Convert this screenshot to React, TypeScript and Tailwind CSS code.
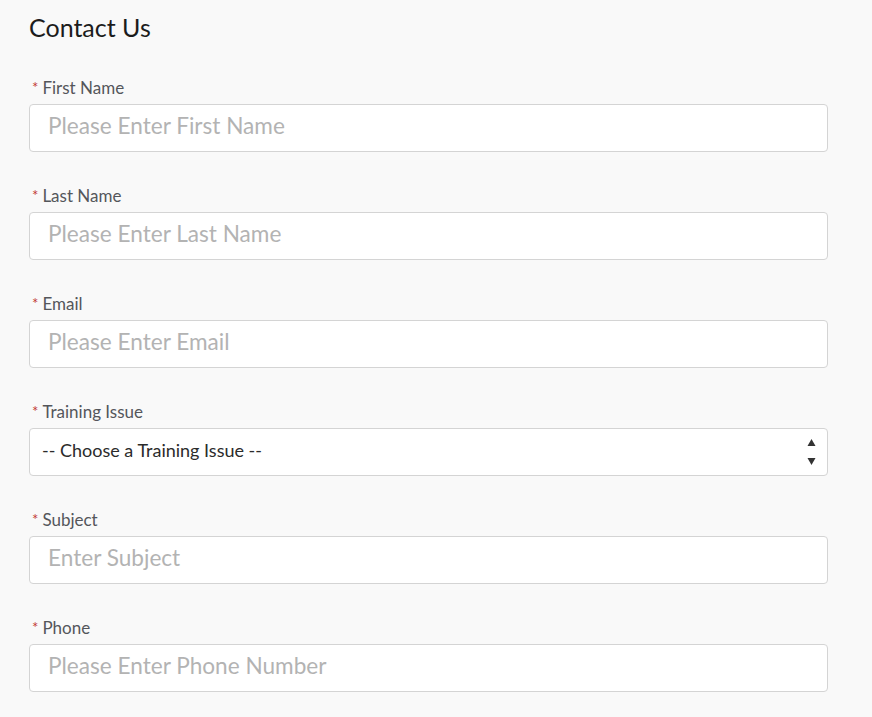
import React from "react";

const FIELDS = [
  { label: "First Name", placeholder: "Please Enter First Name" },
  { label: "Last Name", placeholder: "Please Enter Last Name" },
  { label: "Email", placeholder: "Please Enter Email" },
  { label: "Training Issue", select: "-- Choose a Training Issue --" },
  { label: "Subject", placeholder: "Enter Subject" },
  { label: "Phone", placeholder: "Please Enter Phone Number" },
];

function Label({ text }: { text: string }) {
  return (
    <label className="flex h-5 items-center text-[17px] leading-5 text-[#54565b]">
      <span className="mr-[4px] ml-[3px] -mt-[3px] text-[15px] text-[#c23934]">*</span>
      {text}
    </label>
  );
}

export default function App() {
  return (
    <div className="min-h-screen bg-[#f9f9f9] pl-[29px] pt-[11px] font-['Lato','Noto_Sans',sans-serif]">
      <h1 className="h-8 text-[25px] leading-8 text-[#1c1c1c]">Contact Us</h1>
      <div className="mt-[35px] flex w-[799px] flex-col gap-[34px]">
        {FIELDS.map((f) => (
          <div key={f.label} className="flex flex-col gap-[6px]">
            <Label text={f.label} />
            {f.select ? (
              <div className="flex h-12 items-center justify-between rounded-[4px] border border-[#d4d4d4] bg-white pb-[3px] pl-3 pr-[11px]">
                <span className="text-[18px] text-[#2b2b2b]">{f.select}</span>
                <svg width="9" height="28" viewBox="0 0 9 28" className="mt-[3px] text-[#333]">
                  <path d="M4.5 1 L8.5 8 L0.5 8 Z" fill="currentColor" />
                  <path d="M0.5 20 L8.5 20 L4.5 27 Z" fill="currentColor" />
                </svg>
              </div>
            ) : (
              <input
                className="h-12 rounded-[4px] border border-[#d4d4d4] bg-white pb-[5px] pl-[18px] text-[22.6px] text-[#333] outline-none placeholder:text-[#b3b3b3]"
                placeholder={f.placeholder}
              />
            )}
          </div>
        ))}
      </div>
    </div>
  );
}
